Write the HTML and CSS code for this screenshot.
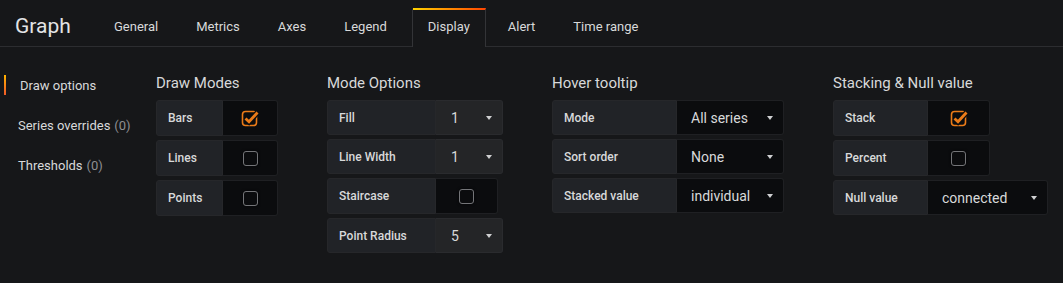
FILE: index.html
```html
<!DOCTYPE html>
<html>
<head>
<meta charset="utf-8">
<link rel="stylesheet" href="styles.css">
</head>
<body>
<div class="editor">
  <header class="header">
    <div class="title">Graph</div>
    <nav class="tabs">
      <div class="tab">General</div>
      <div class="tab">Metrics</div>
      <div class="tab">Axes</div>
      <div class="tab">Legend</div>
      <div class="tab active">Display</div>
      <div class="tab">Alert</div>
      <div class="tab">Time range</div>
    </nav>
  </header>
  <main class="content">
    <aside class="sidebar">
      <div class="side-item active"><span class="marker"></span><span>Draw options</span></div>
      <div class="side-item">Series overrides <span class="count">(0)</span></div>
      <div class="side-item">Thresholds <span class="count">(0)</span></div>
    </aside>

    <section class="section">
      <h3 class="section-title">Draw Modes</h3>
      <div class="row row-switch">
        <div class="label w67">Bars</div>
        <div class="ctrl check w55"><svg class="cb" width="20" height="18" viewBox="0 0 20 18"><rect x="1.5" y="2.5" width="14" height="14" rx="3" fill="none" stroke="#eb7b18" stroke-width="1.6"/><path d="M4.5 9.5 L8 12.8 L16.5 3.5" fill="none" stroke="#0b0c0e" stroke-width="5.5"/><path d="M4.5 9.5 L8 12.8 L16.5 3.5" fill="none" stroke="#eb7b18" stroke-width="2.8"/></svg></div>
      </div>
      <div class="row row-switch">
        <div class="label w67">Lines</div>
        <div class="ctrl check w55"><span class="box"></span></div>
      </div>
      <div class="row row-switch">
        <div class="label w67">Points</div>
        <div class="ctrl check w55"><span class="box"></span></div>
      </div>
    </section>

    <section class="section">
      <h3 class="section-title">Mode Options</h3>
      <div class="row">
        <div class="label w109">Fill</div>
        <div class="ctrl select light w67"><span>1</span><span class="caret"></span></div>
      </div>
      <div class="row">
        <div class="label w109">Line Width</div>
        <div class="ctrl select light w67"><span>1</span><span class="caret"></span></div>
      </div>
      <div class="row row-switch">
        <div class="label w109">Staircase</div>
        <div class="ctrl check w62"><span class="box"></span></div>
      </div>
      <div class="row">
        <div class="label w109">Point Radius</div>
        <div class="ctrl select light w67"><span>5</span><span class="caret"></span></div>
      </div>
    </section>

    <section class="section">
      <h3 class="section-title">Hover tooltip</h3>
      <div class="row">
        <div class="label w125">Mode</div>
        <div class="ctrl select w107"><span>All series</span><span class="caret"></span></div>
      </div>
      <div class="row">
        <div class="label w125">Sort order</div>
        <div class="ctrl select w107"><span>None</span><span class="caret"></span></div>
      </div>
      <div class="row">
        <div class="label w125">Stacked value</div>
        <div class="ctrl select w107"><span>individual</span><span class="caret"></span></div>
      </div>
    </section>

    <section class="section">
      <h3 class="section-title">Stacking &amp; Null value</h3>
      <div class="row row-switch">
        <div class="label w95">Stack</div>
        <div class="ctrl check w62"><svg class="cb" width="20" height="18" viewBox="0 0 20 18"><rect x="1.5" y="2.5" width="14" height="14" rx="3" fill="none" stroke="#eb7b18" stroke-width="1.6"/><path d="M4.5 9.5 L8 12.8 L16.5 3.5" fill="none" stroke="#0b0c0e" stroke-width="5.5"/><path d="M4.5 9.5 L8 12.8 L16.5 3.5" fill="none" stroke="#eb7b18" stroke-width="2.8"/></svg></div>
      </div>
      <div class="row row-switch">
        <div class="label w95">Percent</div>
        <div class="ctrl check w62"><span class="box"></span></div>
      </div>
      <div class="row">
        <div class="label w95">Null value</div>
        <div class="ctrl select w120"><span>connected</span><span class="caret"></span></div>
      </div>
    </section>
  </main>
</div>
</body>
</html>
```

FILE: styles.css
```css
* { box-sizing: border-box; }
html, body {
  margin: 0;
  padding: 0;
  background: #161719;
  color: #d8d9da;
  font-family: Roboto, "Liberation Sans", sans-serif;
}
.editor {
  width: 1063px;
  height: 283px;
  background: #161719;
}
.header {
  display: flex;
  align-items: flex-end;
  height: 47px;
  border-bottom: 1px solid #2c2d30;
}
.title {
  font-size: 21px;
  line-height: 39px;
  padding-left: 15px;
  width: 95px;
  color: #e3e4e5;
  margin-bottom: 0;
}
.tabs {
  display: flex;
  align-items: flex-end;
  margin-bottom: -1px;
}
.tab {
  font-size: 13px;
  line-height: 34px;
  height: 39px;
  padding: 0 15px;
  margin: 0 3px;
  color: #d8d9da;
  border: 1px solid transparent;
  border-top-width: 2px;
  border-bottom: 0;
}
.tab.active {
  padding: 0 15px;
  margin: 0 3px 0 6px;
  border-color: #333437;
  border-top-color: transparent;
  background: linear-gradient(to right, #ffd500, #ff4400) 0 0 / 100% 2px no-repeat border-box, #161719;
}
.content {
  display: flex;
  column-gap: 49px;
}
.sidebar {
  width: 107px;
  padding-top: 18px;
  display: flex;
  flex-direction: column;
}
.side-item {
  height: 40px;
  display: flex;
  align-items: center;
  padding-left: 18px;
  font-size: 13px;
  white-space: nowrap;
  color: #d8d9da;
}
.side-item .count {
  color: #8e8e91;
  margin-left: 4px;
}
.side-item.active {
  padding-left: 4px;
}
.marker {
  width: 2px;
  height: 20px;
  margin-right: 14px;
  background: linear-gradient(to bottom, #ffb300, #f05a28);
}
.section {
  padding-top: 26px;
  display: flex;
  flex-direction: column;
  align-items: flex-start;
}
.section-title {
  margin: 0 0 7px;
  font-size: 15px;
  font-weight: 400;
  line-height: 20px;
  color: #d8d9da;
  white-space: nowrap;
}
.row {
  display: flex;
  height: 35px;
  margin-bottom: 4px;
}
.row.row-switch { height: 36px; }
.label {
  display: flex;
  align-items: center;
  padding-left: 11px;
  font-size: 12px;
  font-weight: 500;
  background: #212327;
  border: 1px solid #26272a;
  border-radius: 3px 0 0 3px;
  white-space: nowrap;
  color: #d8d9da;
}
.ctrl {
  display: flex;
  align-items: center;
  background: #0b0c0e;
  border: 1px solid #1f2023;
  border-left: 0;
  border-radius: 0 3px 3px 0;
}
.check { justify-content: center; }
.select {
  justify-content: space-between;
  padding: 0 10px 0 14px;
  font-size: 14px;
  color: #d8d9da;
}
.select.light {
  background: #242527;
  border-color: #2a2b2e;
  padding-left: 15px;
}
.caret {
  width: 0;
  height: 0;
  border-left: 3.5px solid transparent;
  border-right: 3.5px solid transparent;
  border-top: 4px solid #d0d1d2;
}
.box {
  width: 15px;
  height: 15px;
  border: 1.6px solid #747578;
  border-radius: 3px;
  box-shadow: 0 0 3px rgba(0, 0, 0, 0.8);
}
.cb { display: block; margin-left: 2px; }
.w55 { width: 55px; }
.w62 { width: 62px; }
.w67 { width: 67px; }
.w95 { width: 95px; }
.w107 { width: 107px; }
.w109 { width: 109px; }
.w120 { width: 120px; }
.w125 { width: 125px; }
```
